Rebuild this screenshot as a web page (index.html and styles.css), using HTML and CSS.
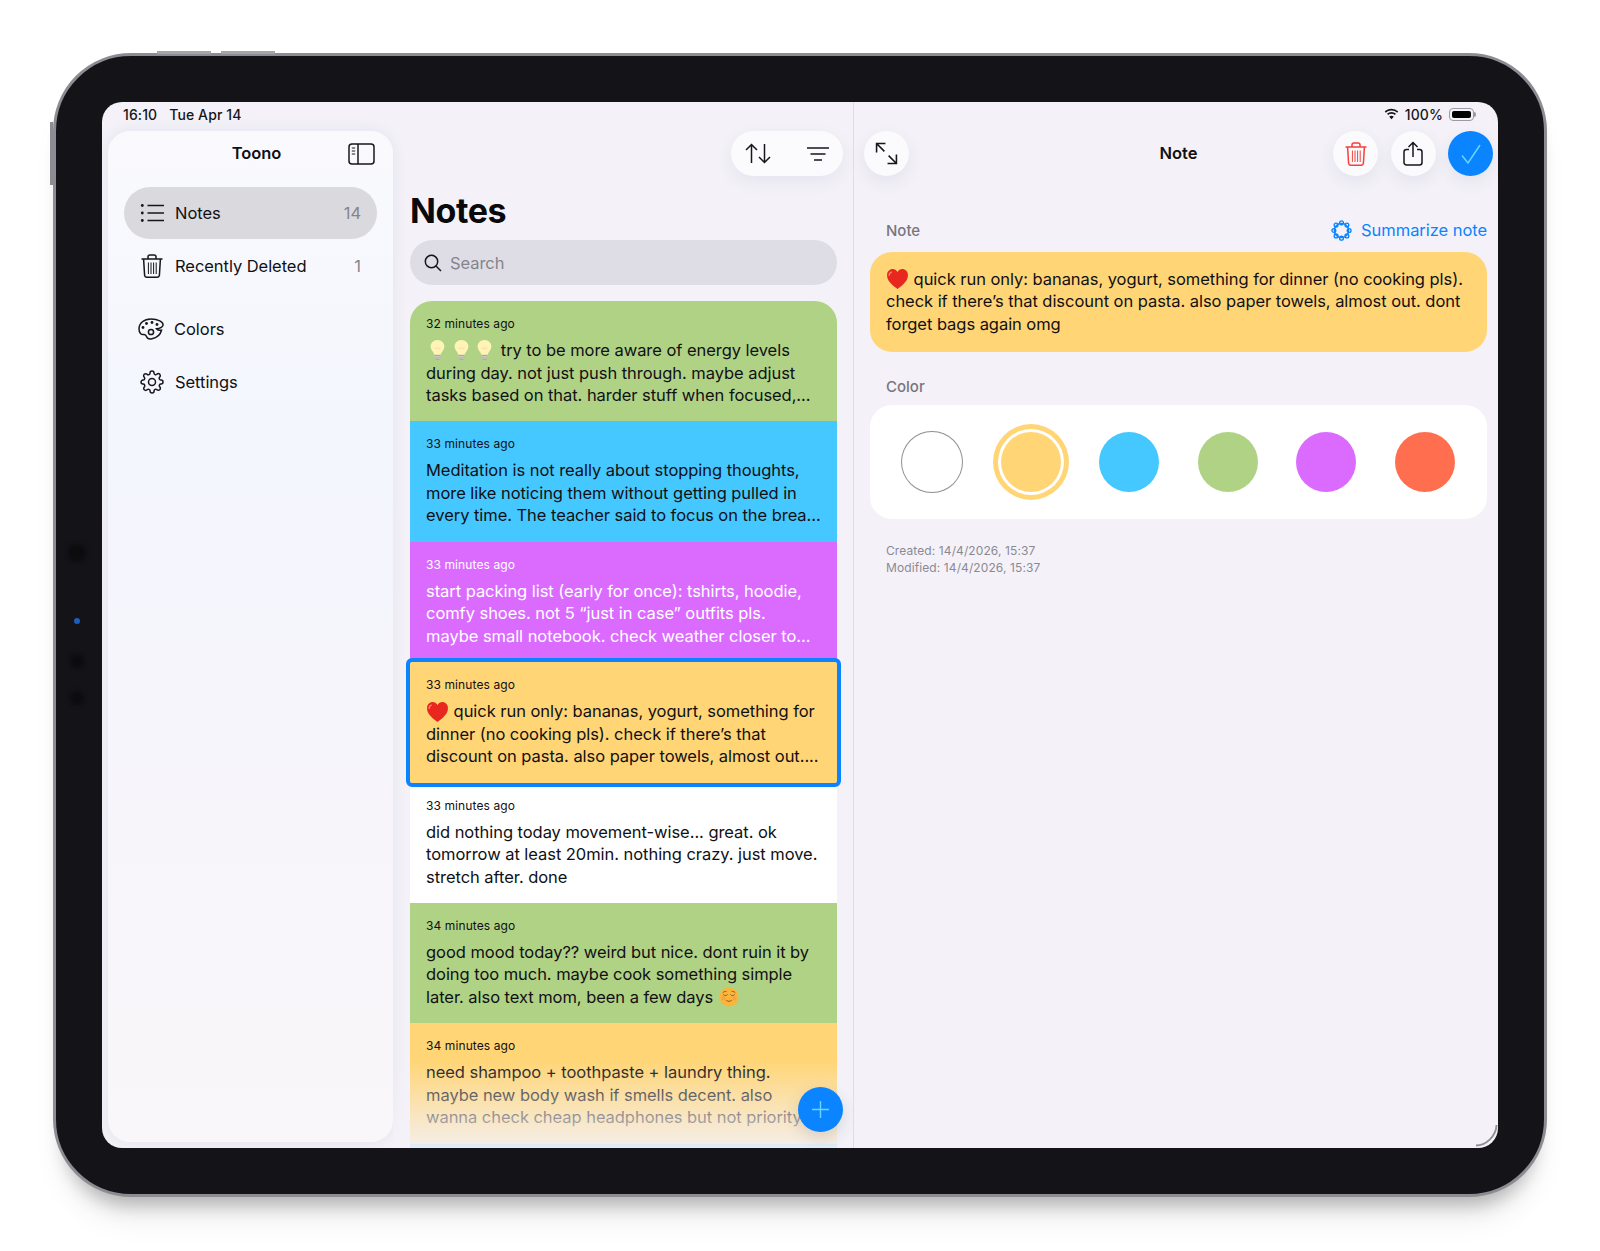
FILE: index.html
```html
<!DOCTYPE html>
<html>
<head>
    <meta charset="UTF-8">
    <meta name="viewport" content="width=device-width, initial-scale=1.0">
    <title>Toono Notes</title>
    <link rel="stylesheet" href="styles.css">
</head>
<body>
    <svg class="defs" width="0" height="0">
        <defs>
            <symbol id="trash" viewBox="0 0 24 24">
                <path d="M1.500 5h21M8 5V2.800A1.800 1.800 0 0 1 9.800 1h4.400A1.800 1.800 0 0 1 16 2.800V5M3.600 5l1 16.300A2.500 2.500 0 0 0 7 23.300h10a2.500 2.500 0 0 0 2.400-2L20.400 5"/>
                <path class="thin" d="M8.400 8.500v11.500M11 8.500v11.500M13.600 8.500v11.500M16.200 8.500v11.500"/>
            </symbol>
            <symbol id="bulb" viewBox="0 0 20 24">
                <path d="M10 1C5.400 1 2.500 4.400 2.500 8.200c0 3 1.800 4.600 3 6.400.6.900.9 1.800 1 2.600h7c.1-.8.4-1.700 1-2.600 1.200-1.800 3-3.400 3-6.400C17.500 4.400 14.600 1 10 1z" fill="#fff3b8"/>
                <path d="M7 9.500c1 1.500 2 1.500 3 0 1 1.500 2 1.500 3 0" fill="none" stroke="#f0d27a" stroke-width=".8"/>
                <path d="M6.800 17.500h6.400v3.300c0 1.300-1.400 2.200-3.200 2.200s-3.200-.9-3.200-2.200z" fill="#a9a9a4"/>
                <path d="M6.800 19.200h6.400M6.800 20.900h6.400" stroke="#e4e4de" stroke-width=".7"/>
            </symbol>
            <symbol id="heart" viewBox="0 0 22 22">
                <path d="M11 21C5 16.500 1 12.800 1 7.800 1 4.300 3.600 2 6.400 2 8.300 2 10 3 11 4.800 12 3 13.700 2 15.600 2 18.400 2 21 4.300 21 7.800c0 5-4 8.700-10 13.200z" fill="#e8281f"/>
                <path d="M5 5c-1.300.5-2 1.700-2 3" fill="none" stroke="#ff8a7c" stroke-width="1.300" stroke-linecap="round"/>
            </symbol>
        </defs>
    </svg>

    <div class="device">
        <span class="side-key key-top-a"></span>
        <span class="side-key key-top-b"></span>
        <span class="side-key key-left"></span>
        <span class="lens lens-a"></span>
        <span class="lens lens-b"></span>
        <span class="lens lens-c"></span>
        <span class="lens lens-d"></span>

        <div class="screen">
            <div class="status-bar">
                <div class="status-left"><span>16:10</span><span>Tue Apr 14</span></div>
                <div class="status-right">
                    <svg class="wifi" viewBox="0 0 16 12"><path d="M8 2.200c2.300 0 4.400.9 6 2.400l1.200-1.300A10.500 10.500 0 0 0 8 .4C5.200.4 2.700 1.500.8 3.300L2 4.600c1.600-1.500 3.700-2.400 6-2.400zM8 5.600c1.400 0 2.600.5 3.600 1.400l1.200-1.300A7 7 0 0 0 8 3.800a7 7 0 0 0-4.800 1.900L4.400 7c1-.9 2.200-1.400 3.600-1.400zM8 11.500l2.400-2.600A3.400 3.400 0 0 0 8 7.900a3.400 3.400 0 0 0-2.400 1z"/></svg>
                    <span>100%</span>
                    <span class="battery"><span class="battery-fill"></span></span>
                </div>
            </div>

            <aside class="sidebar">
                <header class="sidebar-head">
                    <span class="sidebar-title">Toono</span>
                    <svg class="icon panel-icon" viewBox="0 0 27 22"><rect x="1" y="1" width="25" height="20" rx="3"/><path d="M10 1v20"/><path class="thin" d="M3.800 5h3.400M3.800 8h3.400M3.800 11h3.400"/></svg>
                </header>
                <nav class="nav-group">
                    <a class="nav-row active">
                        <svg class="icon" viewBox="0 0 24 24"><circle class="solid" cx="2.300" cy="4.500" r="1.400"/><circle class="solid" cx="2.300" cy="12" r="1.400"/><circle class="solid" cx="2.300" cy="19.500" r="1.400"/><path d="M7.500 4.500H24M7.500 12H24M7.500 19.500H24"/></svg>
                        <span class="nav-label">Notes</span><span class="nav-count">14</span>
                    </a>
                    <a class="nav-row">
                        <svg class="icon"><use href="#trash"/></svg>
                        <span class="nav-label">Recently Deleted</span><span class="nav-count">1</span>
                    </a>
                </nav>
                <nav class="nav-group second">
                    <a class="nav-row">
                        <svg class="icon wide" viewBox="0 0 26 22"><path d="M13 1C6 1 1 5 1 11c0 4 2.500 6 4.500 5.500 1.500-.3 2.500.5 3 2 .7 2 3 2.700 5.500 2.200 5-1 8.500-4.500 9.500-8.500-2.500.3-4-.2-5-1.500 2-.2 5.500-.6 6.500-3.500C25.500 4 20 1 13 1z"/><circle cx="13" cy="14" r="2.600"/><circle class="solid" cx="5" cy="9.500" r="1.400"/><circle class="solid" cx="8.500" cy="5.500" r="1.400"/><circle class="solid" cx="14" cy="4.500" r="1.400"/><circle class="solid" cx="19" cy="6.500" r="1.400"/></svg>
                        <span class="nav-label">Colors</span>
                    </a>
                    <a class="nav-row">
                        <svg class="icon" viewBox="0 0 24 24"><circle cx="12" cy="12" r="3.500"/><path d="M19.400 15a1.650 1.650 0 0 0 .33 1.820l.06.06a2 2 0 0 1 0 2.830 2 2 0 0 1-2.830 0l-.06-.06a1.650 1.650 0 0 0-1.820-.33 1.650 1.650 0 0 0-1 1.510V21a2 2 0 0 1-2 2 2 2 0 0 1-2-2v-.09A1.650 1.650 0 0 0 9 19.400a1.650 1.650 0 0 0-1.820.33l-.06.06a2 2 0 0 1-2.830 0 2 2 0 0 1 0-2.830l.06-.06a1.650 1.650 0 0 0 .33-1.820 1.650 1.650 0 0 0-1.510-1H3a2 2 0 0 1-2-2 2 2 0 0 1 2-2h.09A1.650 1.650 0 0 0 4.600 9a1.650 1.650 0 0 0-.33-1.820l-.06-.06a2 2 0 0 1 0-2.830 2 2 0 0 1 2.830 0l.06.06a1.650 1.650 0 0 0 1.820.33H9a1.650 1.650 0 0 0 1-1.510V3a2 2 0 0 1 2-2 2 2 0 0 1 2 2v.09a1.650 1.650 0 0 0 1 1.510 1.650 1.650 0 0 0 1.820-.33l.06-.06a2 2 0 0 1 2.830 0 2 2 0 0 1 0 2.830l-.06.06a1.650 1.650 0 0 0-.33 1.820V9a1.650 1.650 0 0 0 1.510 1H21a2 2 0 0 1 2 2 2 2 0 0 1-2 2h-.09a1.650 1.650 0 0 0-1.510 1z"/></svg>
                        <span class="nav-label">Settings</span>
                    </a>
                </nav>
            </aside>

            <main class="list-pane">
                <div class="list-toolbar">
                    <div class="pill-group">
                        <svg class="icon sort-icon" viewBox="0 0 26 21"><path d="M6.500 20V1.500M1 7l5.500-5.500L12 7M19.500 1v18.500M14 14l5.500 5.500L25 14"/></svg>
                        <svg class="icon filter-icon" viewBox="0 0 22 14"><path d="M0 1h22M3.500 7h15M7 13h8"/></svg>
                    </div>
                </div>
                <h1 class="list-title">Notes</h1>
                <div class="search">
                    <svg class="icon search-icon" viewBox="0 0 18 18"><circle cx="7.500" cy="7.500" r="6.200"/><path class="bold" d="M12 12l5 5"/></svg>
                    <span>Search</span>
                </div>
                <div class="note-list">
                    <article class="note green top">
                        <div class="note-time">32 minutes ago</div>
                        <p class="note-text"><svg class="emoji bulb"><use href="#bulb"/></svg> <svg class="emoji bulb"><use href="#bulb"/></svg> <svg class="emoji bulb"><use href="#bulb"/></svg> try to be more aware of energy levels<br>during day. not just push through. maybe adjust<br>tasks based on that. harder stuff when focused,...</p>
                    </article>
                    <article class="note blue">
                        <div class="note-time">33 minutes ago</div>
                        <p class="note-text">Meditation is not really about stopping thoughts,<br>more like noticing them without getting pulled in<br>every time. The teacher said to focus on the brea...</p>
                    </article>
                    <article class="note purple">
                        <div class="note-time">33 minutes ago</div>
                        <p class="note-text">start packing list (early for once): tshirts, hoodie,<br>comfy shoes. not 5 “just in case” outfits pls.<br>maybe small notebook. check weather closer to...</p>
                    </article>
                    <article class="note yellow selected">
                        <div class="note-time">33 minutes ago</div>
                        <p class="note-text"><svg class="emoji"><use href="#heart"/></svg> quick run only: bananas, yogurt, something for<br>dinner (no cooking pls). check if there’s that<br>discount on pasta. also paper towels, almost out....</p>
                    </article>
                    <article class="note white">
                        <div class="note-time">33 minutes ago</div>
                        <p class="note-text">did nothing today movement-wise... great. ok<br>tomorrow at least 20min. nothing crazy. just move.<br>stretch after. done</p>
                    </article>
                    <article class="note green">
                        <div class="note-time">34 minutes ago</div>
                        <p class="note-text">good mood today?? weird but nice. dont ruin it by<br>doing too much. maybe cook something simple<br>later. also text mom, been a few days <svg class="emoji face" viewBox="0 0 20 20"><circle cx="10" cy="10" r="9.500" fill="#f9b53c"/><path d="M4.500 7.800c1 1.200 2.800 1.200 3.800 0M11.700 7.800c1 1.200 2.800 1.200 3.800 0M7.500 13.500c1.500 1.200 3.500 1.200 5 0M4 5.500c1-.9 2-1.200 3-1.100M16 5.500c-1-.9-2-1.200-3-1.100" fill="none" stroke="#8a4b12" stroke-width=".9" stroke-linecap="round"/><circle cx="4.500" cy="11.500" r="2" fill="#f78f4a" opacity=".5"/><circle cx="15.500" cy="11.500" r="2" fill="#f78f4a" opacity=".5"/></svg></p>
                    </article>
                    <article class="note yellow">
                        <div class="note-time">34 minutes ago</div>
                        <p class="note-text">need shampoo + toothpaste + laundry thing.<br>maybe new body wash if smells decent. also<br>wanna check cheap headphones but not priority.</p>
                    </article>
                    <article class="note blue"></article>
                    <div class="list-fade"></div>
                    <button class="fab">
                        <svg class="icon" viewBox="0 0 20 20"><path d="M10 1v18M1 10h18"/></svg>
                    </button>
                </div>
            </main>

            <section class="detail-pane">
                <div class="detail-toolbar">
                    <div class="toolbar-left">
                        <div class="round-btn">
                            <svg class="icon expand-icon" viewBox="0 0 22 22"><path d="M1.500 10V1.500H10M1.500 1.500l7.500 7.500M20.500 12v8.500H12M20.500 20.500L13 13"/></svg>
                        </div>
                    </div>
                    <div class="detail-title">Note</div>
                    <div class="toolbar-right">
                        <div class="round-btn">
                            <svg class="icon red"><use href="#trash"/></svg>
                        </div>
                        <div class="round-btn">
                            <svg class="icon share-icon" viewBox="0 0 20 25"><path d="M6 8.500H3.500A2.500 2.500 0 0 0 1 11v10.500A2.500 2.500 0 0 0 3.500 24h13a2.500 2.500 0 0 0 2.500-2.500V11a2.500 2.500 0 0 0-2.500-2.500H14M10 16V1.500M5.500 6L10 1.500 14.500 6"/></svg>
                        </div>
                        <div class="round-btn primary">
                            <svg class="icon check-icon" viewBox="0 0 20 20"><path d="M1 11.500L7 19 19 1"/></svg>
                        </div>
                    </div>
                </div>

                <div class="field-head">
                    <span class="field-label">Note</span>
                    <a class="summarize">
                        <svg class="icon summary-icon" viewBox="0 0 22 22"><circle cx="11" cy="11" r="7.500"/><circle cx="19" cy="11" r="2"/><circle cx="16.660" cy="16.660" r="2"/><circle cx="11" cy="19" r="2"/><circle cx="5.340" cy="16.660" r="2"/><circle cx="3" cy="11" r="2"/><circle cx="5.340" cy="5.340" r="2"/><circle cx="11" cy="3" r="2"/><circle cx="16.660" cy="5.340" r="2"/></svg>
                        Summarize note
                    </a>
                </div>
                <div class="note-body">
                    <svg class="emoji"><use href="#heart"/></svg> quick run only: bananas, yogurt, something for dinner (no cooking pls).<br>check if there’s that discount on pasta. also paper towels, almost out. dont<br>forget bags again omg
                </div>

                <div class="field-head color-head">
                    <span class="field-label">Color</span>
                </div>
                <div class="swatches">
                    <span class="swatch white-swatch"></span>
                    <span class="swatch yellow picked"></span>
                    <span class="swatch blue"></span>
                    <span class="swatch green"></span>
                    <span class="swatch purple"></span>
                    <span class="swatch red-swatch"></span>
                </div>

                <div class="meta">
                    <div>Created: 14/4/2026, 15:37</div>
                    <div>Modified: 14/4/2026, 15:37</div>
                </div>
                <svg class="home-arc" viewBox="0 0 24 24"><path d="M1 22.500C11 22.500 22 13 22.500 1"/></svg>
            </section>
        </div>
    </div>
</body>
</html>
```

FILE: styles.css
```css
* {
    box-sizing: border-box;
}
body {
    margin: 0;
    width: 1600px;
    height: 1251px;
    padding: 53px 0 0 53px;
    overflow: hidden;
    background: #fff;
    font-family: Inter, "Noto Sans", sans-serif;
    color: #111014;
}
.defs {
    position: absolute;
}
.device {
    position: relative;
    width: 1494px;
    height: 1144px;
    padding: 46px;
    border: 3px solid #8d8c93;
    border-radius: 78px;
    background: #141318;
    box-shadow: 0 20px 18px -12px rgba(0, 0, 0, 0.26), 0 30px 30px -8px rgba(0, 0, 0, 0.07);
}
.side-key {
    position: absolute;
    background: #a5a4aa;
}
.key-top-a {
    top: -5px;
    left: 101px;
    width: 54px;
    height: 3px;
}
.key-top-b {
    top: -5px;
    left: 165px;
    width: 54px;
    height: 3px;
}
.key-left {
    top: 66px;
    left: -6px;
    width: 3px;
    height: 63px;
    background: #8d8c93;
}
.lens {
    position: absolute;
    left: 14px;
    width: 14px;
    height: 14px;
    border-radius: 50%;
    background: #0c0b0e;
    filter: blur(2px);
}
.lens-a {
    top: 488px;
    width: 18px;
    height: 18px;
    left: 12px;
}
.lens-b {
    top: 562px;
    left: 18px;
    width: 6px;
    height: 6px;
    background: #1a5fc0;
    filter: blur(0.6px);
}
.lens-c {
    top: 598px;
}
.lens-d {
    top: 635px;
}

.screen {
    position: relative;
    display: grid;
    grid-template-columns: 291px 461px 644px;
    width: 1396px;
    height: 1046px;
    overflow: hidden;
    border-radius: 20px;
    background: #f4f2f8;
    font-size: 16.5px;
    letter-spacing: -0.05px;
    white-space: nowrap;
}
.status-bar {
    position: absolute;
    top: 0;
    left: 0;
    right: 0;
    height: 29px;
    padding: 0 24px 5px 21px;
    display: flex;
    justify-content: space-between;
    align-items: center;
    font-size: 14px;
    font-weight: 500;
    letter-spacing: 0.1px;
    color: #17161a;
}
.status-left {
    display: flex;
    gap: 12px;
}
.status-right {
    display: flex;
    align-items: center;
    gap: 6px;
}
.wifi {
    width: 15px;
    height: 12px;
    fill: #17161a;
}
.battery {
    position: relative;
    width: 25px;
    height: 13px;
    padding: 2px;
    border: 1px solid #9c9ba1;
    border-radius: 4px;
}
.battery::after {
    content: "";
    position: absolute;
    top: 3px;
    right: -3px;
    width: 2px;
    height: 5px;
    border-radius: 0 2px 2px 0;
    background: #9c9ba1;
}
.battery-fill {
    display: block;
    height: 100%;
    border-radius: 2px;
    background: #000;
}

.icon {
    width: 24px;
    height: 24px;
    flex: none;
    fill: none;
    stroke: #17161a;
    stroke-width: 1.5;
}
.icon .solid {
    fill: #17161a;
    stroke: none;
}
.icon .thin,
symbol .thin {
    stroke-width: 1;
}

.sidebar {
    margin: 29px 0 6px 6px;
    border-radius: 22px;
    background: linear-gradient(180deg, #fafafd 0%, #f3f6fd 30%, #f7f5fb 65%, #f9f7f9 100%);
    box-shadow: 0 0 14px rgba(90, 90, 130, 0.1);
}
.sidebar-head {
    position: relative;
    height: 46px;
    margin-bottom: 10px;
    display: flex;
    justify-content: center;
    align-items: center;
    padding: 0 0 2px 12px;
}
.sidebar-title {
    font-weight: 600;
}
.panel-icon {
    position: absolute;
    right: 18px;
    top: 12px;
    width: 27px;
    height: 22px;
}
.nav-group {
    padding: 0 16px;
}
.nav-group.second {
    margin-top: 11px;
}
.nav-row {
    display: flex;
    align-items: center;
    height: 52px;
    margin-bottom: 1px;
    padding: 0 16px;
    border-radius: 26px;
    gap: 11px;
}
.nav-row.active {
    background: #d9d9de;
}
.nav-label {
    flex: 1;
}
.nav-count {
    color: #85848b;
}
.icon.wide {
    width: 26px;
    height: 22px;
    margin: 0 -1px 0 -2px;
}

.list-pane {
    display: flex;
    flex-direction: column;
    min-height: 0;
    padding-top: 29px;
    border-right: 1px solid #dfdee5;
}
.list-toolbar {
    display: flex;
    justify-content: flex-end;
    padding-right: 10px;
}
.pill-group {
    display: flex;
    justify-content: space-between;
    align-items: center;
    width: 112px;
    height: 45px;
    padding: 0 14px 0 14px;
    border-radius: 23px;
    background: #fbfbfe;
    box-shadow: 0 6px 16px rgba(70, 70, 110, 0.08);
}
.sort-icon {
    width: 26px;
    height: 21px;
}
.filter-icon {
    width: 22px;
    height: 14px;
}
.list-title {
    margin: 15px 0 0 17px;
    font-size: 34px;
    line-height: 40px;
    font-weight: 700;
    letter-spacing: -0.4px;
    color: #0a090c;
}
.search {
    display: flex;
    align-items: center;
    gap: 8px;
    height: 45px;
    margin: 9px 16px 0 17px;
    padding: 0 14px;
    border-radius: 23px;
    background: #dedde6;
    color: #85848d;
}
.search-icon {
    width: 18px;
    height: 18px;
}
.note-list {
    position: relative;
    flex: 1;
    min-height: 0;
    margin-top: 16px;
    overflow: hidden;
}
.note {
    position: relative;
    height: 120.4px;
    margin: 0 16px 0 17px;
    padding: 15px 16px 0;
}
.note.top {
    border-radius: 22px 22px 0 0;
}
.note.selected {
    z-index: 1;
    outline: 4px solid #0a84ff;
    border-radius: 2px;
}
.note-time {
    font-size: 12px;
    line-height: 16px;
    font-weight: 400;
    letter-spacing: 0.1px;
}
.note-text {
    margin: 7px 0 0;
    line-height: 22.5px;
}
.green {
    background: #b0d285;
}
.blue {
    background: #45c8ff;
}
.purple {
    background: #db6bff;
    color: #fff;
}
.yellow {
    background: #ffd576;
}
.white {
    background: #fff;
}
.emoji {
    width: 23px;
    height: 23px;
    margin: -3px 0;
    vertical-align: -2.5px;
}
.emoji.bulb {
    width: 19px;
    height: 22px;
    vertical-align: -2px;
}
.emoji.bulb:first-child {
    margin-left: 2px;
}
.emoji.bulb:nth-child(3) {
    margin-right: 2px;
}
.emoji.face {
    width: 20px;
    height: 20px;
    margin-left: 1px;
    vertical-align: -1px;
}
.list-fade {
    position: absolute;
    z-index: 2;
    left: 0;
    right: 0;
    bottom: 0;
    height: 88px;
    background: linear-gradient(180deg, rgba(244, 242, 248, 0), rgba(244, 242, 248, 0.9));
}
.fab {
    position: absolute;
    z-index: 3;
    right: 10px;
    bottom: 16px;
    display: flex;
    justify-content: center;
    align-items: center;
    width: 45px;
    height: 45px;
    padding: 0;
    border: none;
    border-radius: 50%;
    background: #0a84ff;
    box-shadow: 0 6px 16px rgba(60, 60, 90, 0.16);
}
.fab .icon {
    width: 19px;
    height: 19px;
    stroke: #6ad6ff;
}

.detail-pane {
    position: relative;
    padding-top: 29px;
}
.detail-toolbar {
    display: grid;
    grid-template-columns: 1fr auto 1fr;
    align-items: center;
    height: 45px;
    padding: 0 5px 0 10px;
}
.detail-title {
    padding-bottom: 2px;
    font-weight: 600;
}
.toolbar-right {
    display: flex;
    justify-content: flex-end;
    gap: 12.5px;
}
.round-btn {
    display: flex;
    justify-content: center;
    align-items: center;
    width: 45px;
    height: 45px;
    border-radius: 50%;
    background: #fbfbfe;
    box-shadow: 0 6px 16px rgba(70, 70, 110, 0.09);
}
.round-btn.primary {
    background: #0a84ff;
}
.icon.red {
    stroke: #f4403a;
}
.expand-icon {
    width: 23px;
    height: 23px;
}
.share-icon {
    width: 20px;
    height: 25px;
}
.check-icon {
    width: 20px;
    height: 20px;
    stroke: #6ad6ff;
}
.field-head {
    display: flex;
    justify-content: space-between;
    align-items: center;
    height: 20px;
    margin: 44px 11px 0 16px;
    padding-left: 16px;
}
.field-head.color-head {
    margin-top: 24px;
}
.field-label {
    font-size: 15px;
    font-weight: 500;
    letter-spacing: 0;
    color: #77767e;
}
.summarize {
    display: flex;
    align-items: center;
    gap: 9px;
    color: #0a84ff;
}
.summary-icon {
    width: 21px;
    height: 21px;
    stroke: #0a84ff;
    stroke-width: 1.4;
}
.note-body {
    height: 100px;
    margin: 12px 11px 0 16px;
    padding: 15.5px 16px;
    border-radius: 22px;
    line-height: 22.5px;
    background: #ffd576;
}
.swatches {
    display: flex;
    justify-content: space-between;
    align-items: center;
    height: 114px;
    margin: 8.5px 11px 0 16px;
    padding: 0 32px;
    border-radius: 22px;
    background: #fff;
}
.swatch {
    width: 60px;
    height: 60px;
    border-radius: 50%;
}
.white-swatch {
    background: #fff;
    box-shadow: 0 0 0 1px #8e8e93;
}
.red-swatch {
    background: #ff6f4f;
}
.picked {
    box-shadow: 0 0 0 3px #fff, 0 0 0 8px #ffd576;
}
.meta {
    margin: 23.5px 0 0 32px;
    font-size: 12px;
    line-height: 17px;
    letter-spacing: 0.1px;
    color: #8b8a92;
}
.home-arc {
    position: absolute;
    right: 0;
    bottom: 1px;
    width: 23px;
    height: 23px;
    fill: none;
    stroke: #8f8e94;
    stroke-width: 2;
}
```
